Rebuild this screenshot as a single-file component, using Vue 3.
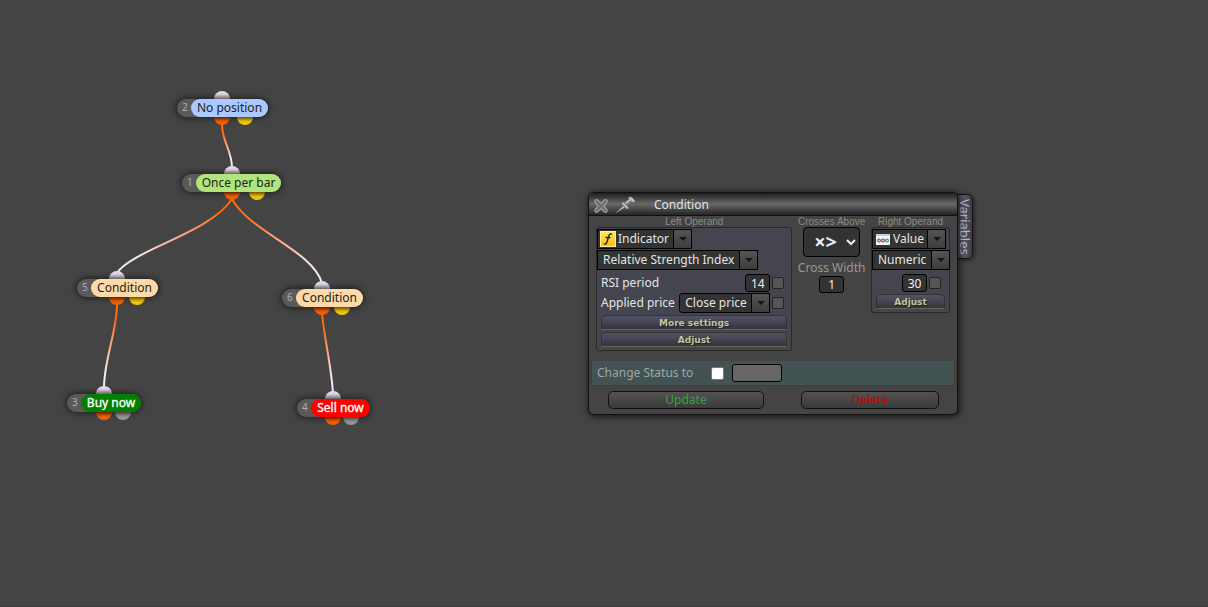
<script setup>
import { ref } from 'vue'

const nodes = [
  { id: 2, label: 'No position', x: 177, y: 99, port: 45, alt: 68, width: 77, tone: 'blue', altTone: 'yellow' },
  { id: 1, label: 'Once per bar', x: 182, y: 174, port: 50, alt: 75, width: 85, tone: 'lime', altTone: 'yellow' },
  { id: 5, label: 'Condition', x: 77, y: 279, port: 40, alt: 60, width: 67, tone: 'peach', altTone: 'yellow' },
  { id: 6, label: 'Condition', x: 282, y: 289, port: 40, alt: 60, width: 67, tone: 'peach', altTone: 'yellow' },
  { id: 3, label: 'Buy now', x: 67, y: 394, port: 37, alt: 56, width: 60, tone: 'green', altTone: 'grey' },
  { id: 4, label: 'Sell now', x: 297, y: 399, port: 36, alt: 54, width: 59, tone: 'red', altTone: 'grey' },
]

const links = [
  { id: 'a', y1: 125, y2: 167, d: 'M222 124C222 142 232 150 232 168' },
  { id: 'b', y1: 199, y2: 272, d: 'M232 199C210 233 132 250 117 273' },
  { id: 'c', y1: 199, y2: 282, d: 'M232 199C250 232 312 250 322 283' },
  { id: 'd', y1: 304, y2: 387, d: 'M117 304C117 332 104 359 104 388' },
  { id: 'e', y1: 314, y2: 392, d: 'M322 314C325 342 331 364 333 393' },
]

const period = ref('14')
const crossWidth = ref('1')
const value = ref('30')
const status = ref('')
</script>

<template>
  <main class="desktop">
    <svg class="links" aria-hidden="true">
      <defs>
        <linearGradient v-for="l in links" :id="'wire-' + l.id" :key="l.id" gradientUnits="userSpaceOnUse" x1="0" x2="0" :y1="l.y1" :y2="l.y2">
          <stop offset="0.2" stop-color="#ff6a0c" />
          <stop offset="0.8" stop-color="#f6e6f4" />
        </linearGradient>
      </defs>
      <path v-for="l in links" :key="l.id" :d="l.d" :stroke="`url(#wire-${l.id})`" fill="none" stroke-width="2" />
    </svg>

    <div v-for="n in nodes" :key="n.id" class="node" :style="{ left: n.x + 'px', top: n.y + 'px' }">
      <span class="port in" :style="{ left: n.port + 'px' }"></span>
      <span class="port out" :style="{ left: n.port + 'px' }"></span>
      <span class="port out" :class="n.altTone" :style="{ left: n.alt + 'px' }"></span>
      <div class="pill">
        <span class="num">{{ n.id }}</span>
        <span class="label" :class="n.tone" :style="{ width: n.width + 'px' }">{{ n.label }}</span>
      </div>
    </div>

    <section class="dialog">
      <button class="tab" type="button">Variables</button>
      <div class="frame">
        <header class="title">
          <button class="tool" type="button" aria-label="Close">
            <svg width="16" height="16" viewBox="0 0 16 16"><path d="M3.500 3.500l9 9m0-9l-9 9" stroke="#a8a8a8" stroke-width="4.600" stroke-linecap="round" /><path d="M3.500 3.500l9 9m0-9l-9 9" stroke="#707070" stroke-width="2.800" stroke-linecap="round" /></svg>
          </button>
          <button class="tool pin" type="button" aria-label="Pin">
            <svg width="24" height="20" viewBox="0 0 24 20">
              <path d="M1 18.500L10 10.500l1.500 1.500z" fill="#b9bdbf" />
              <path d="M8 7.500q-1.500 1 0 2.500l4.500 4q2 .5 2-1l-.5-2.500 3-3q2 .5 3.500-.5l-5.500-5q-1.500 1-1 2.500l-3 2.500z" fill="#757d81" />
              <path d="M8.500 8l5.500 5.500M11.500 8.500L16.500 4.500" stroke="#c5cdcf" stroke-width="1.400" fill="none" />
              <ellipse cx="18" cy="4.500" rx="1.500" ry="3.600" transform="rotate(-45 18 4.500)" fill="#b9c2c5" />
            </svg>
          </button>
          <h1>Condition</h1>
        </header>

        <div class="operands">
          <div class="left">
            <h2>Left Operand</h2>
            <div class="box">
              <div class="combo">
                <svg class="glyph" width="16" height="16" viewBox="0 0 16 16">
                  <defs><linearGradient id="gold" x1="0" y1="0" x2="0" y2="1"><stop offset="0" stop-color="#ffe75c" /><stop offset="1" stop-color="#fdbb12" /></linearGradient></defs>
                  <rect x=".5" y=".5" width="15" height="15" fill="url(#gold)" stroke="#fff0a0" />
                  <path d="M12 3.500q-2-1.500-3 1L7 11q-1 3-3 1.500M5.500 6.500h5" fill="none" stroke="#222" stroke-width="1.400" />
                </svg>
                <select aria-label="Left operand type"><option>Indicator</option></select><i class="arrow"></i>
              </div>
              <div class="combo wide"><select aria-label="Indicator"><option>Relative Strength Index</option></select><i class="arrow"></i></div>
              <div class="row first">
                <label for="period">RSI period</label>
                <input id="period" v-model="period" class="num-field" type="text">
                <input class="tick" type="checkbox" aria-label="Use variable for RSI period">
              </div>
              <div class="row">
                <label for="price">Applied price</label>
                <div class="combo rounded"><select id="price"><option>Close price</option></select><i class="arrow"></i></div>
                <input class="tick" type="checkbox" aria-label="Use variable for applied price">
              </div>
              <button class="bar" type="button">More settings</button>
              <button class="bar" type="button">Adjust</button>
            </div>
          </div>

          <div class="middle">
            <h2>Crosses Above</h2>
            <div class="cross">
              <select aria-label="Comparison"><option>×&gt;</option></select>
              <svg width="10" height="7" viewBox="0 0 10 7"><path d="M1 1l4 4 4-4" fill="none" stroke="#eee" stroke-width="2" /></svg>
            </div>
            <label for="cross-width">Cross Width</label>
            <input id="cross-width" v-model="crossWidth" class="num-field" type="text">
          </div>

          <div class="right">
            <h2>Right Operand</h2>
            <div class="box">
              <div class="combo">
                <svg class="glyph" width="16" height="16" viewBox="0 0 16 16">
                  <rect x="1" y="3" width="14" height="11" fill="#f5f5f5" /><rect x="1" y="3" width="14" height="2" fill="#c3cbe0" />
                  <g fill="none" stroke-width="1.200"><circle cx="4" cy="9.500" r="1.400" stroke="#d8403a" /><circle cx="8" cy="9.500" r="1.400" stroke="#3c6fb0" /><circle cx="12" cy="9.500" r="1.400" stroke="#4a9b58" /></g>
                </svg>
                <select aria-label="Right operand type"><option>Value</option></select><i class="arrow"></i>
              </div>
              <div class="combo wide"><select aria-label="Value type"><option>Numeric</option></select><i class="arrow"></i></div>
              <div class="row first">
                <input v-model="value" class="num-field" type="text" aria-label="Value">
                <input class="tick" type="checkbox" aria-label="Use variable for value">
              </div>
              <button class="bar" type="button">Adjust</button>
            </div>
          </div>
        </div>

        <div class="status">
          <label for="change">Change Status to</label>
          <input id="change" class="check" type="checkbox">
          <input v-model="status" class="status-field" type="text" aria-label="New status">
        </div>
        <footer>
          <button class="action update" type="button">Update</button>
          <button class="action delete" type="button">Delete</button>
        </footer>
      </div>
    </section>
  </main>
</template>

<style>
body {
  background: #444;
}
</style>

<style scoped>
* {
  box-sizing: border-box;
}
.desktop {
  position: relative;
  min-height: 100vh;
  overflow: hidden;
  background: #444;
  border-bottom: 1px solid #3a3a3a;
  font: 12px/16px "Noto Sans", sans-serif;
  color: #e4e4e4;
}
button, input, select {
  margin: 0;
  padding: 0;
  font: inherit;
  color: inherit;
  appearance: none;
  border: 0;
  border-radius: 0;
  background: none;
}
.links {
  position: absolute;
  inset: 0;
  width: 100%;
  height: 100%;
}
.node {
  position: absolute;
}
.port {
  position: absolute;
  width: 16px;
  height: 16px;
  margin-left: -8px;
  border-radius: 50%;
}
.port.in {
  top: -8px;
  background: linear-gradient(#eadff0 20%, #a79fab 50%);
}
.port.out {
  top: 10px;
  background: linear-gradient(#8a3000 45%, #fa6205 75%);
}
.port.yellow {
  background: linear-gradient(#9a7c00 45%, #f6cc0c 75%);
}
.port.grey {
  background: linear-gradient(#666 45%, #9a9a9a 75%);
}
.pill {
  position: relative;
  display: flex;
  height: 18px;
  border-radius: 9px;
  background: #5a5a5a;
  box-shadow: 0 0 6px 1px rgba(0, 0, 0, 0.6);
}
.num {
  width: 14px;
  padding-left: 5px;
  font-size: 10px;
  line-height: 17px;
  color: #b0b0b0;
}
.label {
  border-radius: 9px;
  line-height: 18px;
  text-align: center;
  white-space: nowrap;
  color: #222;
}
.blue { background: #abc8ff; }
.lime { background: #b0e57c; }
.peach { background: #ffdaa8; }
.green, .red {
  color: #fff;
  -webkit-text-stroke: 0.3px #fff;
}
.green { background: #008000; }
.red { background: #f00; }

.dialog {
  position: absolute;
  left: 588px;
  top: 192px;
  width: 370px;
}
.frame {
  position: relative;
  border: 1px solid #111;
  border-radius: 6px;
  background: #444;
  box-shadow: 1px 1px 6px 1px rgba(0, 0, 0, 0.65);
}
.tab {
  position: absolute;
  left: 100%;
  top: 2px;
  width: 16px;
  height: 65px;
  margin-left: -1px;
  border: 1px solid #151518;
  border-radius: 0 6px 6px 0;
  background: linear-gradient(90deg, #4d4d60, #565668 50%, #3b3b4b);
  box-shadow: 1px 1px 4px rgba(0, 0, 0, 0.6);
  writing-mode: vertical-rl;
  font-size: 13px;
  line-height: 14px;
  color: #bbb;
}
.title {
  display: flex;
  align-items: center;
  height: 23px;
  padding-top: 1px;
  border-bottom: 1px solid #111;
  border-radius: 5px 5px 0 0;
  background: linear-gradient(#1d1d1d, #686868 50%, #242424);
}
.tool {
  width: 16px;
  height: 20px;
  margin-left: 4px;
}
.tool svg {
  display: block;
  margin-top: 2px;
}
.pin {
  width: 24px;
  margin-left: 5px;
}
.pin svg {
  margin-top: 0;
}
h1 {
  margin: 0 0 0 16px;
  font-size: 12px;
  line-height: 18px;
  padding-top: 1px;
  font-weight: 400;
}
h2 {
  margin: 0;
  height: 11px;
  font: 10px/12px "Liberation Sans", sans-serif;
  text-align: center;
  white-space: nowrap;
  color: #8a8a8a;
}
.operands {
  display: flex;
  align-items: flex-start;
  justify-content: space-between;
  padding: 0 7px;
}
.left {
  width: 197px;
}
.middle {
  display: flex;
  flex-direction: column;
  align-items: center;
  width: 79px;
  color: #999;
}
.right {
  width: 79px;
}
.box {
  display: flex;
  flex-direction: column;
  align-items: flex-start;
  border: 1px solid #292929;
  border-radius: 3px;
  background: #454550;
  padding: 1px 0 3px;
}
.combo {
  display: flex;
  align-items: center;
  height: 20px;
  border: 1px solid #000;
  background: #333;
}
.combo select {
  height: 18px;
  padding: 0 4px 0 5px;
  line-height: 18px;
}
.combo .glyph {
  margin-left: 2px;
}
.combo .glyph + select {
  padding: 0 3px 0 2px;
}
.arrow {
  display: flex;
  align-items: center;
  justify-content: center;
  width: 18px;
  height: 18px;
  border-left: 1px solid #000;
  background: linear-gradient(#555, #3e3e3e);
}
.arrow::before {
  content: "";
  border: 4px solid transparent;
  border-top-color: #151515;
  border-bottom-width: 0;
}
.wide {
  margin-top: 1px;
}
.rounded {
  border-radius: 3px 0 0 3px;
  margin-left: auto;
}
.row {
  display: flex;
  align-items: center;
  align-self: stretch;
  height: 20px;
  padding: 0 7px 0 4px;
}
.right .row {
  padding-right: 8px;
}
.first {
  margin-top: 3px;
}
.num-field {
  width: 25px;
  height: 18px;
  border: 1px solid #000;
  border-radius: 3px;
  background: #333;
  text-align: center;
  color: #eee;
}
.row .num-field {
  margin-left: auto;
}
.tick {
  width: 12px;
  height: 12px;
  margin-left: 2px;
  border: 1px solid #222;
  border-radius: 2px;
  background: #555;
}
.bar {
  align-self: stretch;
  height: 15px;
  margin: 2px 4px 0;
  border: 1px solid #34342b;
  border-bottom: 1px dotted #77775c;
  border-radius: 5px 5px 0 0;
  background: linear-gradient(#535366, #34343f);
  font: bold 9px/12px "DejaVu Sans", sans-serif;
  text-shadow: 1px 1px 1px #222;
  color: #c2c2a0;
}
.right .bar {
  margin-top: 1px;
}
.cross {
  display: flex;
  align-items: center;
  gap: 9px;
  width: 57px;
  height: 30px;
  padding-left: 10px;
  border: 1px solid #000;
  border-radius: 4px;
  background: #333;
  color: #eee;
}
.cross select {
  height: 28px;
  font: bold 20px/26px "Noto Sans", sans-serif;
}
.middle label {
  margin: 3px 0 0;
}
.middle .num-field {
  height: 17px;
}
.status {
  display: flex;
  align-items: center;
  height: 25px;
  margin: 10px 2px 0;
  padding-left: 5px;
  border: solid #443f2a;
  border-width: 0 1px 1px;
  background: #435353;
  color: #9aa8a8;
}
.check {
  width: 13px;
  height: 13px;
  margin: 0 8px 0 18px;
  border: 1px solid #777;
  border-radius: 2px;
  background: #fff;
}
.status-field {
  width: 50px;
  height: 18px;
  border: 1px solid #000;
  border-radius: 3px;
  background: #666;
}
footer {
  display: flex;
  justify-content: space-between;
  padding: 5px 18px 5px 19px;
}
.action {
  width: 156px;
  height: 18px;
  border: 1px solid #111;
  border-radius: 5px;
  background: linear-gradient(#525252, #3a3a3a);
  line-height: 16px;
}
.update {
  color: #30aa30;
}
.delete {
  width: 138px;
  color: #d00000;
}
</style>
